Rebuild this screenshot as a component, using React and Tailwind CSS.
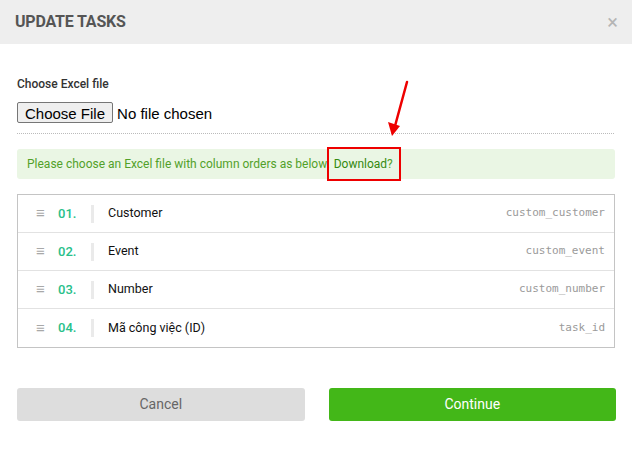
import React from 'react';

const columns = [
  { no: '01.', name: 'Customer', key: 'custom_customer' },
  { no: '02.', name: 'Event', key: 'custom_event' },
  { no: '03.', name: 'Number', key: 'custom_number' },
  { no: '04.', name: 'Mã công việc (ID)', key: 'task_id' },
];

function App() {
  return (
    <div className="w-[632px] h-[449px] bg-white relative font-['Roboto',sans-serif] overflow-hidden">
      {/* Header */}
      <div className="h-[44px] bg-[#eeeeee] flex items-center justify-between pl-[15px] pr-[14px]">
        <h2 className="text-[16px] font-bold text-[#555555] tracking-[-0.2px]">UPDATE TASKS</h2>
        <span className="text-[#b5b5b5] text-[20px] leading-none">×</span>
      </div>

      <div className="px-[17px] pt-[32px]">
        <div className="text-[12px] font-medium text-[#333333] leading-[16px]">Choose Excel file</div>
        <div className="mt-[10px] h-[32px] border-b border-dotted border-[#bbbbbb] mr-[1px]">
          <input type="file" className="block h-[21px] text-[15px] leading-[21px] font-['Liberation_Sans',Arial,sans-serif] file:h-[21px] file:mr-[4px] file:px-[7px] file:py-0 file:border file:border-[#767676] file:bg-[#efefef] file:rounded-[2px] file:text-[#000] file:font-['Liberation_Sans',Arial,sans-serif]" />
        </div>

        <div className="mt-[15px] h-[30px] bg-[#eaf6e4] rounded-[3px] flex items-center px-[10px] text-[12px] text-[#52a12a] relative">
          <span>Please choose an Excel file with column orders as below.</span>
          <span className="ml-[4px] text-[#348a0f] relative">
            Download
            <span className="absolute left-[-7px] top-[-8px] w-[74px] h-[34px] border-[2px] border-[#ee0000]" />
          </span>
          <span>?</span>
        </div>

        <div className="mt-[15px] border border-[#c4c4c4]">
          {columns.map((c, i) => (
            <div key={c.no} className={`h-[38px] flex items-center pl-[18px] pr-[9px] ${i < columns.length - 1 ? 'border-b border-[#e2e2e2]' : ''}`}>
              <span className="text-[#a8a8a8] text-[15px] w-[22px] leading-none">≡</span>
              <span className="text-[#29c08a] text-[13px] font-medium w-[33px]">{c.no}</span>
              <span className="w-[3px] h-[18px] bg-[#eaeaea] mr-[14px]" />
              <span className="text-[12.5px] text-[#111111] flex-1">{c.name}</span>
              <span className="text-[11px] text-[#9a9a9a] font-['DejaVu_Sans_Mono',monospace]">{c.key}</span>
            </div>
          ))}
        </div>

        <div className="mt-[40px] flex gap-[24px] mr-[-1px]">
          <button className="flex-1 h-[33px] bg-[#dddddd] rounded-[3px] text-[14px] text-[#666666]">Cancel</button>
          <button className="flex-1 h-[33px] bg-[#43b718] rounded-[3px] text-[14px] text-white">Continue</button>
        </div>
      </div>

      {/* Annotation arrow */}
      <svg className="absolute left-[380px] top-[78px]" width="40" height="64" viewBox="0 0 40 64">
        <line x1="27" y1="4" x2="15" y2="48" stroke="#ee0000" strokeWidth="2.5" strokeLinecap="round" />
        <polygon points="8,44 20,48 12,58" fill="#ee0000" />
      </svg>
    </div>
  );
}

export default App;
